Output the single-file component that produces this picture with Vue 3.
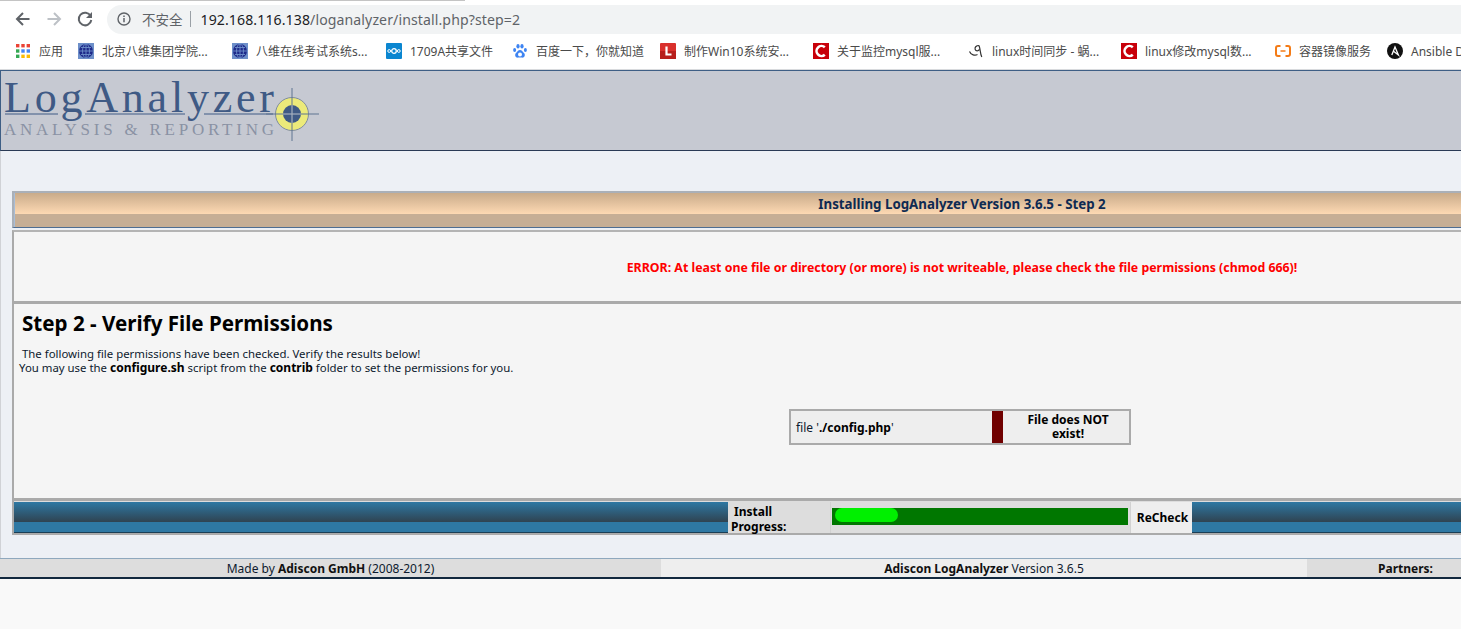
<script setup>
const bookmarks = [
  { icon: 'apps', text: '应用', w: 63 },
  { icon: 'globe', text: '北京八维集团学院...', w: 154 },
  { icon: 'globe', text: '八维在线考试系统s...', w: 154 },
  { icon: 'cloud', text: '1709A共享文件', w: 126 },
  { icon: 'paw', text: '百度一下，你就知道', w: 148 },
  { icon: 'tile', text: '制作Win10系统安...', w: 153 },
  { icon: 'c', text: '关于监控mysql服...', w: 155 },
  { icon: 'snail', text: 'linux时间同步 - 蜗...', w: 153 },
  { icon: 'c', text: 'linux修改mysql数...', w: 154 },
  { icon: 'ali', text: '容器镜像服务', w: 112 },
  { icon: 'ansible', text: 'Ansible Documentation', w: 200 }
]
</script>

<template>
  <div class="screen">
    <div class="toolbar">
      <svg class="nav" width="18" height="18" viewBox="0 0 18 18"><path d="M15.5 9H3.5M9 3L3 9l6 6" fill="none" stroke="#5f6368" stroke-width="2"/></svg>
      <svg class="nav" width="18" height="18" viewBox="0 0 18 18"><path d="M2.5 9h12M9 3l6 6-6 6" fill="none" stroke="#bdc1c6" stroke-width="2"/></svg>
      <svg class="nav" width="18" height="18" viewBox="0 0 18 18"><path d="M14.6 6A6.3 6.3 0 1 0 15.3 10" fill="none" stroke="#5f6368" stroke-width="2"/><path d="M16 2v6h-6z" fill="#5f6368"/></svg>
      <div class="omnibox">
        <svg width="14" height="14" viewBox="0 0 14 14"><circle cx="7" cy="7" r="6" fill="none" stroke="#5f6368" stroke-width="1.4"/><path d="M7 6v4.2M7 3.4v1.5" stroke="#5f6368" stroke-width="1.5"/></svg>
        <span class="insecure">不安全</span>
        <span class="divider"></span>
        <span class="url"><span class="host">192.168.116.138</span>/loganalyzer/install.php?step=2</span>
      </div>
    </div>

    <div class="bookmarks">
      <div v-for="(b, i) in bookmarks" :key="i" class="bookmark" :style="{ width: b.w + 'px' }">
        <svg class="bm-icon" width="16" height="16" viewBox="0 0 16 16">
          <g v-if="b.icon === 'apps'">
            <rect x="1" y="1" width="3.4" height="3.4" fill="#ea4335"/><rect x="6.3" y="1" width="3.4" height="3.4" fill="#ea4335"/><rect x="11.6" y="1" width="3.4" height="3.4" fill="#ea4335"/>
            <rect x="1" y="6.3" width="3.4" height="3.4" fill="#34a853"/><rect x="6.3" y="6.3" width="3.4" height="3.4" fill="#4285f4"/><rect x="11.6" y="6.3" width="3.4" height="3.4" fill="#4285f4"/>
            <rect x="1" y="11.6" width="3.4" height="3.4" fill="#34a853"/><rect x="6.3" y="11.6" width="3.4" height="3.4" fill="#fbbc05"/><rect x="11.6" y="11.6" width="3.4" height="3.4" fill="#fbbc05"/>
          </g>
          <g v-else-if="b.icon === 'globe'">
            <rect width="16" height="16" fill="#6d8fc9"/><circle cx="8" cy="8" r="7" fill="#1e2a8a"/>
            <path d="M1 8h14M8 1v14M3 4.5h10M3 11.5h10" stroke="#6d8fc9" stroke-width=".9"/><ellipse cx="8" cy="8" rx="3.5" ry="7" fill="none" stroke="#6d8fc9" stroke-width=".9"/>
          </g>
          <g v-else-if="b.icon === 'cloud'">
            <rect width="16" height="16" rx="1" fill="#0b86d0"/>
            <circle cx="8" cy="8" r="2.3" fill="none" stroke="#fff" stroke-width="1.3"/><circle cx="3.2" cy="8" r="1.4" fill="none" stroke="#fff"/><circle cx="12.8" cy="8" r="1.4" fill="none" stroke="#fff"/>
          </g>
          <g v-else-if="b.icon === 'paw'" fill="#3e84f2">
            <ellipse cx="2.6" cy="7" rx="1.5" ry="2"/><ellipse cx="6" cy="3.200" rx="1.6" ry="2.200"/><ellipse cx="10" cy="3.200" rx="1.600" ry="2.200"/><ellipse cx="13.400" cy="7" rx="1.500" ry="2"/>
            <path d="M8 7c-2 0-2.500 1.800-4 3C2.500 11.300 3 15 6 14.600c1.200-.2 2.800-.2 4 0 3 .4 3.500-3.300 2-4.600C10.500 8.800 10 7 8 7z"/>
            <ellipse cx="8" cy="11.500" rx="2" ry="2" fill="#fff"/>
          </g>
          <g v-else-if="b.icon === 'tile'">
            <rect width="16" height="16" rx="1" fill="#d9302c"/><rect y="8" width="16" height="8" fill="#b81f1c"/><path d="M6.500 3.500v8h5" fill="none" stroke="#fff" stroke-width="2.200"/>
          </g>
          <g v-else-if="b.icon === 'c'">
            <rect width="16" height="16" fill="#c8000a"/><path d="M11.800 4.200A5 5 0 1 0 11.800 11.800" fill="none" stroke="#fff" stroke-width="2.600"/>
          </g>
          <g v-else-if="b.icon === 'snail'">
            <path d="M1.500 8.500C3 12 7 13 9.500 11.500M11 2.500c-3 0-4.500 2-3.800 4 .6 1.800 3.300 1.800 4 0M11 2.500c1.500 4 1 8 2.800 11.500" fill="none" stroke="#333" stroke-width="1.200"/>
          </g>
          <g v-else-if="b.icon === 'ali'">
            <path d="M5.500 3H3Q1 3 1 5v6q0 2 2 2h2.500M10.500 3H13q2 0 2 2v6q0 2-2 2h-2.500" fill="none" stroke="#f47b16" stroke-width="2"/><path d="M5.500 8h5" stroke="#f47b16" stroke-width="1.500"/>
          </g>
          <g v-else>
            <circle cx="8" cy="8" r="8" fill="#111"/><path d="M4.800 12L8 4l3.400 8L6.500 8.300" fill="none" stroke="#fff" stroke-width="1.300"/>
          </g>
        </svg>
        <span class="bm-text">{{ b.text }}</span>
      </div>
    </div>

    <header class="banner">
      <svg width="330" height="80" viewBox="0 0 330 80">
        <text class="logo-main" x="3" y="41" textLength="270" lengthAdjust="spacing">LogAnalyzer</text>
        <path d="M4 43h53M84 43h100M203 43h69" stroke="#3f5a85" stroke-width="1" fill="none"/>
        <text class="logo-sub" x="3" y="64" textLength="270" lengthAdjust="spacing">ANALYSIS &amp; REPORTING</text>
        <circle cx="291" cy="43" r="16.500" fill="#ecea7a" stroke="#7f8ca0"/>
        <circle cx="291" cy="43" r="9" fill="#3f5a85"/>
        <path d="M265 43h53M291 17v53" stroke="#5f7491" stroke-width="1"/>
        <path d="M282 43h18M291 34v18" stroke="#a9b3c2" stroke-width="1"/>
      </svg>
    </header>

    <main class="content">
      <section class="box">
        <div class="title-bar"><span>Installing LogAnalyzer Version 3.6.5 - Step 2</span></div>
        <div class="error-row">ERROR: At least one file or directory (or more) is not writeable, please check the file permissions (chmod 666)!</div>
        <div class="step-row">
          <h2>Step 2 - Verify File Permissions</h2>
          <p>&nbsp;The following file permissions have been checked. Verify the results below!<br>You may use the <b>configure.sh</b> script from the <b>contrib</b> folder to set the permissions for you.</p>
          <div class="file-table">
            <div class="file-name">file '<b>./config.php</b>'</div>
            <div class="file-flag"></div>
            <div class="file-status">File does NOT exist!</div>
          </div>
        </div>
        <div class="progress-row">
          <div class="side-bar left"></div>
          <div class="progress-label">&nbsp;Install Progress:</div>
          <div class="progress-cell"><div class="track"><div class="fill"></div></div></div>
          <div class="recheck">ReCheck</div>
          <div class="side-bar"></div>
        </div>
      </section>
    </main>

    <footer class="footer">
      <div class="foot-a">Made by <b>Adiscon GmbH</b> (2008-2012)</div>
      <div class="foot-b"><b>Adiscon LogAnalyzer</b> Version 3.6.5</div>
      <div class="foot-c"><b>Partners:</b></div>
    </footer>
  </div>
</template>

<style scoped>
.screen {
  width: 1461px;
  height: 629px;
  overflow: hidden;
  background: #f9f9f9;
  font-family: "Noto Sans", "Noto Sans CJK SC", sans-serif;
  font-size: 12px;
  color: #0d1a2e;
}
.toolbar {
  height: 33px;
  box-sizing: border-box;
  background: linear-gradient(to right, #c4c4c4 465px, #fff 465px) top / 100% 1px no-repeat #fff;
  display: flex;
  align-items: center;
  padding: 5px 0 0 14px;
  gap: 13px;
}
.nav { flex: none; }
.omnibox {
  flex: none;
  width: 1400px;
  height: 29px;
  box-sizing: border-box;
  border-radius: 15px;
  background: #f1f3f4;
  display: flex;
  align-items: center;
  padding-left: 10px;
  color: #5f6368;
}
.insecure { margin-left: 11px; font-size: 13.500px; }
.divider { width: 1px; height: 16px; background: #9aa0a6; margin: 0 10px 0 7px; }
.url { font-size: 14.100px; letter-spacing: .1px; }
.host { color: #202124; }
.bookmarks {
  height: 37px;
  background: #fff;
  display: flex;
  align-items: center;
  padding-left: 15px;
  box-sizing: border-box;
  border-bottom: 1px solid #d8dadd;
}
.bookmark { flex: none; display: flex; align-items: center; gap: 8px; white-space: nowrap; }
.bm-icon { flex: none; }
.bm-text { font-size: 12px; color: #4a4a4a; }
.banner {
  height: 81px;
  box-sizing: border-box;
  background: #c6c9d2;
  border-top: 1px solid #3e5e85;
  border-left: 1px solid #3e5e85;
  border-bottom: 1px solid #2a3a55;
}
.banner svg { display: block; }
.logo-main { font-family: "Liberation Serif", serif; font-size: 44px; fill: #3f5a85; }
.logo-sub { font-family: "Liberation Serif", serif; font-size: 17px; fill: #8a92a4; }
.content {
  height: 407px;
  box-sizing: border-box;
  background: #edf0f5;
  border-left: 1px solid #d0d2d6;
  padding: 40px 0 0 11px;
}
.box { width: 1898px; }
.title-bar {
  height: 37px;
  box-sizing: border-box;
  border: 2px solid #aab0b8;
  border-width: 2px 0 0 2px;
  border-bottom: 1px solid #4e6d92;
  box-shadow: inset 1px 0 #a9bdd6;
  background: linear-gradient(#c9ab8a, #fdd9b3) top / 100% 21px no-repeat #c6ae95;
  display: flex;
  justify-content: center;
  padding-top: 2px;
  font-weight: 700;
  font-size: 13.300px;
  color: #0e2a52;
}
.error-row {
  height: 74px;
  margin-top: 2px;
  box-sizing: border-box;
  background: #f5f5f5;
  border-top: 2px solid #b4b4b4;
  border-left: 2px solid #aaa;
  border-bottom: 3px solid #aaa;
  padding-top: 2px;
  display: flex;
  align-items: center;
  justify-content: center;
  font-weight: 700;
  font-size: 12.350px;
  color: #f00;
}
.step-row {
  height: 194px;
  box-sizing: border-box;
  background: #f5f5f5;
  border-left: 2px solid #aaa;
  padding: 5px 0 0 5px;
  font-size: 11.400px;
}
.step-row h2 { margin: 0 0 0 3px; font-size: 20.600px; line-height: 28px; font-weight: 700; color: #000; }
.step-row p { margin: 10px 0 0; line-height: 14px; }
.step-row b { color: #000; font-size: 12px; }
.file-table {
  width: 342px;
  height: 36px;
  box-sizing: border-box;
  margin: 34px auto 0 770px;
  border: 2px solid #aaa;
  background: #eee;
  display: flex;
  font-size: 12px;
}
.file-name { width: 201px; padding-left: 5px; box-sizing: border-box; align-self: center; }
.file-flag { width: 11px; background: #700000; }
.file-status { flex: 1; text-align: center; font-weight: 700; align-self: center; line-height: 14px; color: #000; padding: 0 12px 0 16px; }
.progress-row {
  height: 37px;
  box-sizing: border-box;
  background: #ddd;
  border-top: 3px solid #aaa;
  border-left: 2px solid #aaa;
  border-bottom: 2px solid #aaa;
  padding-top: 1px;
  display: flex;
}
.side-bar {
  flex: 1;
  background: linear-gradient(#2e78a3, #2f4351) top / 100% 20px no-repeat #2e78a3;
  border-bottom: 1px solid #1a3e55;
}
.side-bar.left { flex: none; width: 714px; }
.progress-label {
  width: 102px;
  box-sizing: border-box;
  background: #ddd;
  font-weight: 700;
  line-height: 15px;
  padding: 2px 0 0 3px;
  color: #000;
}
.progress-cell {
  width: 301px;
  box-sizing: border-box;
  background: #ddd;
  border-left: 1px solid #d2d2d2;
  border-right: 1px solid #d2d2d2;
  padding: 6px 2px 0 1px;
}
.track { height: 17px; background: #007700; padding: 0 0 0 3px; box-sizing: border-box; }
.fill { width: 63px; height: 14px; background: #00f000; border-radius: 7px; filter: blur(.7px); }
.recheck {
  width: 61px;
  box-sizing: border-box;
  background: #eee;
  font-weight: 700;
  display: flex;
  align-items: center;
  justify-content: center;
  padding-left: 2px;
  color: #000;
}
.footer {
  height: 21px;
  box-sizing: border-box;
  border-top: 1px solid #8fa8bd;
  border-bottom: 2px solid #12283e;
  display: flex;
  width: 1922px;
  line-height: 19px;
}
.footer b { color: #111; }
.foot-a { width: 661px; background: #ddd; text-align: center; }
.foot-b { width: 646px; background: #eee; text-align: center; }
.foot-c { flex: 1; background: #ddd; padding-left: 71px; }
</style>
